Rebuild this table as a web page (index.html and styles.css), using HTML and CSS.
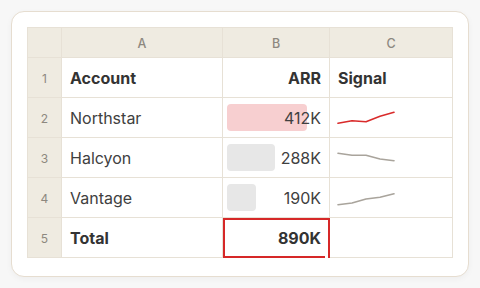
FILE: index.html
```html
<!DOCTYPE html>
<html>
<head>
<meta charset="utf-8">
<link rel="stylesheet" href="styles.css">
</head>
<body>
<div class="card">
  <div class="sheet">
    <div class="hd corner"></div>
    <div class="hd col">A</div>
    <div class="hd col">B</div>
    <div class="hd col">C</div>

    <div class="hd rn">1</div>
    <div class="cell bold">Account</div>
    <div class="cell bold num">ARR</div>
    <div class="cell bold">Signal</div>

    <div class="hd rn">2</div>
    <div class="cell">Northstar</div>
    <div class="cell num"><span class="bar pink" style="width:80px"></span><span class="val">412K</span></div>
    <div class="cell spark">
      <svg width="60" height="16" viewBox="0 0 60 16"><polyline points="2,13.3 16,10.7 30,11.7 44,6.3 58,2.3" fill="none" stroke="#d92b2b" stroke-width="1.6" stroke-linejoin="round" stroke-linecap="round"/></svg>
    </div>

    <div class="hd rn">3</div>
    <div class="cell">Halcyon</div>
    <div class="cell num"><span class="bar grey" style="width:48px"></span><span class="val">288K</span></div>
    <div class="cell spark">
      <svg width="60" height="16" viewBox="0 0 60 16"><polyline points="2,3.3 16,5.3 30,5.3 44,9 58,10.7" fill="none" stroke="#a9a49c" stroke-width="1.6" stroke-linejoin="round" stroke-linecap="round"/></svg>
    </div>

    <div class="hd rn">4</div>
    <div class="cell">Vantage</div>
    <div class="cell num"><span class="bar grey" style="width:29px"></span><span class="val">190K</span></div>
    <div class="cell spark">
      <svg width="60" height="16" viewBox="0 0 60 16"><polyline points="2,14.7 16,13 30,9 44,7.3 58,3.7" fill="none" stroke="#a9a49c" stroke-width="1.6" stroke-linejoin="round" stroke-linecap="round"/></svg>
    </div>

    <div class="hd rn">5</div>
    <div class="cell bold">Total</div>
    <div class="cell bold num selected"><span class="val">890K</span><span class="sel"><span class="handle"></span></span></div>
    <div class="cell"></div>
  </div>
</div>
</body>
</html>
```
FILE: styles.css
```css
* { box-sizing: border-box; }
html, body { margin: 0; padding: 0; }
body {
  width: 480px;
  height: 288px;
  background: #f7f7f7;
  font-family: Inter, "Noto Sans", sans-serif;
  padding: 11px;
}
.card {
  width: 458px;
  height: 266px;
  background: #ffffff;
  border: 1px solid #e6ddd0;
  border-radius: 13px;
  padding: 15px;
  box-shadow: 0 2px 6px rgba(0,0,0,0.04);
}
.sheet {
  display: grid;
  grid-template-columns: 33px 160px 106px 122px;
  grid-template-rows: 29px repeat(5, 39px);
  gap: 1px;
  padding: 1px;
  background: #e7e1d6;
  width: 426px;
}
.hd {
  background: #efebe1;
  color: #8d887f;
  font-size: 12px;
  display: flex;
  align-items: center;
  justify-content: center;
}
.col { font-weight: 500; font-size: 12.5px; padding-top: 1px; }
.rn { padding-top: 1px; }
.cell {
  background: #ffffff;
  color: #404040;
  font-size: 16px;
  display: flex;
  align-items: center;
  padding: 1px 8px 0;
  position: relative;
}
.cell.bold { font-weight: 700; color: #333333; }
.cell.num { justify-content: flex-end; padding: 1px 8px 0 4px; }
.bar {
  position: absolute;
  left: 4px;
  top: 6px;
  height: 27px;
  border-radius: 4px;
}
.bar.pink { background: #f7cfd0; }
.bar.grey { background: #e7e7e7; }
.val { position: relative; }
.spark { padding-left: 6px; padding-top: 0; }
.spark svg { display: block; }
.sel {
  position: absolute;
  left: 0;
  top: 0;
  right: -1px;
  bottom: -1px;
  border: 2px solid #d62828;
}
.handle {
  position: absolute;
  right: 0px;
  bottom: -2px;
  width: 3px;
  height: 3px;
  background: #ffffff;
}
```
